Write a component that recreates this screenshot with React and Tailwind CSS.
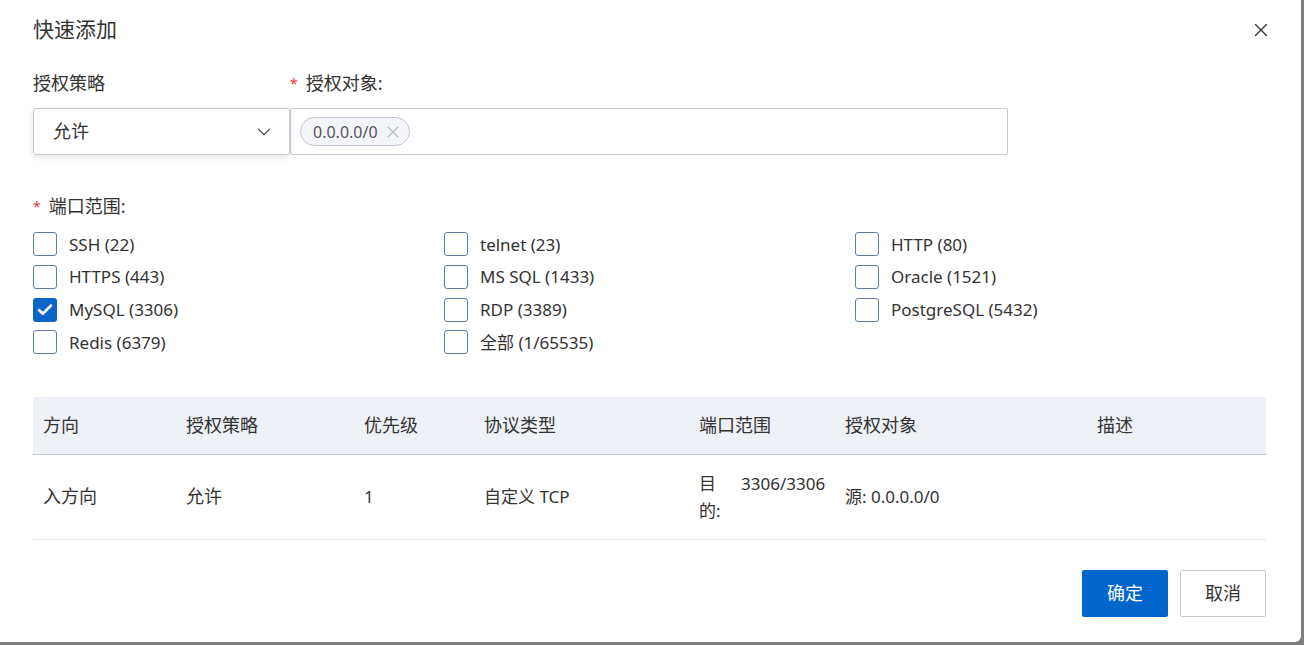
import { X, ChevronDown, Check } from "lucide-react";

const ports = [
    ["SSH (22)", false],
    ["telnet (23)", false],
    ["HTTP (80)", false],
    ["HTTPS (443)", false],
    ["MS SQL (1433)", false],
    ["Oracle (1521)", false],
    ["MySQL (3306)", true],
    ["RDP (3389)", false],
    ["PostgreSQL (5432)", false],
    ["Redis (6379)", false],
    ["全部 (1/65535)", false],
];

const cols = [
    ["方向", "w-[143px]"],
    ["授权策略", "w-[178px]"],
    ["优先级", "w-[120px]"],
    ["协议类型", "w-[215px]"],
    ["端口范围", "w-[146px]"],
    ["授权对象", "w-[252px]"],
    ["描述", "flex-1"],
];

function PortBox({ label, checked }) {
    return (
        <label className="flex items-center h-[32.7px] gap-3 text-[17px] text-[#333]">
            {checked ? (
                <span className="w-6 h-6 rounded-[3px] bg-[#0b65c8] flex items-center justify-center">
                    <Check size={18} strokeWidth={3.4} className="text-white" />
                </span>
            ) : (
                <span className="w-6 h-6 rounded-[3px] border border-[#5f7d9c] bg-white" />
            )}
            <span>{label}</span>
        </label>
    );
}

export default function App() {
    return (
        <div
            className="w-[1304px] h-[645px] bg-[#7d7d7d] overflow-hidden"
            style={{ fontFamily: '"Noto Sans", "Noto Sans CJK SC", sans-serif' }}
        >
            <div className="w-[1301px] h-[642px] bg-white rounded-br-[6px] px-[33px] text-[#333]">
                {/* Header */}
                <div className="flex items-center justify-between h-[58px] pt-[1px]">
                    <h2 className="text-[21px] text-[#333]">快速添加</h2>
                    <X size={22} strokeWidth={1.5} className="text-[#333] mr-[-4px]" />
                </div>

                {/* Policy + target */}
                <div className="flex">
                    <div className="w-[257px]">
                        <div className="h-[50px] flex items-center text-[18px]">授权策略</div>
                        <div className="h-[47px] border border-[#c6cbd3] rounded-[3px] shadow-[0_2px_6px_rgba(0,0,0,0.12)] flex items-center justify-between pl-[19px] pr-[14px] text-[18px]">
                            <span>允许</span>
                            <ChevronDown size={22} strokeWidth={1.3} className="text-[#555]" />
                        </div>
                    </div>
                    <div className="w-[718px]">
                        <div className="h-[50px] flex items-center text-[18px]">
                            <span className="text-[#e5393a] text-[14px] mr-[8px]">*</span>授权对象:
                        </div>
                        <div className="h-[47px] border border-[#c6cbd3] rounded-[2px] flex items-center pl-[9px]">
                            <span className="h-[29px] flex items-center gap-[5px] px-[12px] pr-[6px] border border-[#c3c8d0] bg-[#f3f5f8] rounded-full text-[16px] text-[#555]">
                                0.0.0.0/0
                                <X size={20} strokeWidth={1.3} className="text-[#b5b9bf]" />
                            </span>
                        </div>
                    </div>
                </div>

                {/* Ports */}
                <div className="mt-[36px] h-[30px] flex items-center text-[18px]">
                    <span className="text-[#e5393a] text-[14px] mr-[8px]">*</span>端口范围:
                </div>
                <div className="grid grid-cols-[411px_411px_1fr] mt-[7px]">
                    {ports.map(([label, checked]) => (
                        <PortBox key={label} label={label} checked={checked} />
                    ))}
                </div>

                {/* Table */}
                <div className="mt-[38px] w-[1233px] text-[18px]">
                    <div className="flex h-[58px] items-center bg-[#eef1f5] border-b border-[#c3c9d2] rounded-t-[3px]">
                        {cols.map(([name, w]) => (
                            <div key={name} className={`${w} px-[10px]`}>{name}</div>
                        ))}
                    </div>
                    <div className="flex h-[85px] items-center border-b border-[#e4e7eb]">
                        <div className="w-[143px] px-[10px]">入方向</div>
                        <div className="w-[178px] px-[10px]">允许</div>
                        <div className="w-[120px] px-[10px] text-[17px]">1</div>
                        <div className="w-[215px] px-[10px] text-[17px]">自定义 TCP</div>
                        <div className="w-[146px] px-[10px] flex leading-[27px] text-[17px]">
                            <span className="w-[20px] shrink-0">目的:</span>
                            <span className="ml-[22px]">3306/3306</span>
                        </div>
                        <div className="w-[252px] px-[10px] text-[17px]">源: 0.0.0.0/0</div>
                        <div className="flex-1 px-[10px]" />
                    </div>
                </div>

                {/* Footer */}
                <div className="flex justify-end gap-3 mt-[30px] w-[1233px]">
                    <button className="w-[86px] h-[47px] bg-[#0066cc] rounded-[2px] text-white text-[18px]">确定</button>
                    <button className="w-[86px] h-[47px] border border-[#c6cbd3] rounded-[2px] text-[#333] text-[18px]">取消</button>
                </div>
            </div>
        </div>
    );
}
